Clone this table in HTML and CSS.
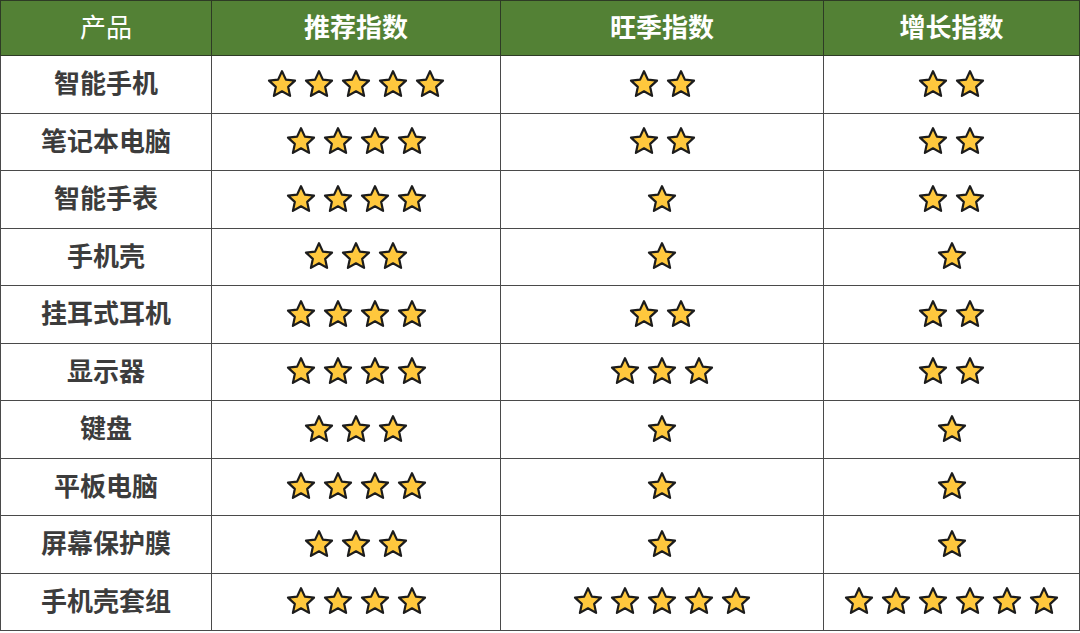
FILE: index.html
```html
<!DOCTYPE html>
<html lang="zh">
<head>
<meta charset="utf-8">
<link rel="stylesheet" href="styles.css">
</head>
<body>
<svg width="0" height="0" class="defs">
  <defs>
    <symbol id="star" viewBox="0 0 32 31">
      <path d="M16 2.2 L19.9 10.6 L29 11.6 L22.2 17.9 L24.1 26.9 L16 22.3 L7.9 26.9 L9.8 17.9 L3 11.6 L12.1 10.6 Z" fill="#FFC83D" stroke="#1c1c1c" stroke-width="2.2" stroke-linejoin="round"/>
    </symbol>
  </defs>
</svg>
<table class="tbl">
  <colgroup>
    <col class="c1"><col class="c2"><col class="c3"><col class="c4">
  </colgroup>
  <thead>
    <tr><th class="plain">产品</th><th>推荐指数</th><th>旺季指数</th><th>增长指数</th></tr>
  </thead>
  <tbody id="body"></tbody>
</table>
<script>
const rows = [
  ["智能手机",5,2,2],["笔记本电脑",4,2,2],["智能手表",4,1,2],["手机壳",3,1,1],
  ["挂耳式耳机",4,2,2],["显示器",4,3,2],["键盘",3,1,1],["平板电脑",4,1,1],
  ["屏幕保护膜",3,1,1],["手机壳套组",4,5,6]
];
const star = '<svg class="star" viewBox="0 0 32 31"><use href="#star"/></svg>';
const tb = document.getElementById('body');
rows.forEach(r => {
  const tr = document.createElement('tr');
  let h = '<td class="name">' + r[0] + '</td>';
  for (let i = 1; i < 4; i++) h += '<td class="rate"><div class="stars">' + star.repeat(r[i]) + '</div></td>';
  tr.innerHTML = h;
  tb.appendChild(tr);
});
</script>
</body>
</html>
```
FILE: styles.css
```css
html, body {
  margin: 0;
  padding: 0;
  background: #ffffff;
}
.defs {
  position: absolute;
  width: 0;
  height: 0;
}
.tbl {
  border-collapse: collapse;
  width: 1079px;
  table-layout: fixed;
  font-family: "Noto Sans CJK SC", "Noto Sans", sans-serif;
}
.c1 { width: 211px; }
.c2 { width: 289px; }
.c3 { width: 323px; }
.c4 { width: 256px; }
.tbl th, .tbl td {
  border: 1px solid #4a4a4a;
  padding: 0;
  text-align: center;
  vertical-align: middle;
}
.tbl th {
  background: #538135;
  color: #ffffff;
  font-size: 26px;
  font-weight: 700;
  height: 50px;
  padding-bottom: 4px;
  border-color: #2e3b25;
  line-height: 1;
}
.tbl th.plain {
  font-weight: 400;
}
.tbl td {
  height: 56.5px;
  color: #3c3c3c;
  font-size: 26px;
  font-weight: 700;
  line-height: 1;
}
.tbl td.name {
  height: 52.5px;
  padding-bottom: 4px;
}
.stars {
  display: flex;
  justify-content: center;
  gap: 5px;
}
.star {
  width: 32px;
  height: 31px;
  display: block;
}
```
